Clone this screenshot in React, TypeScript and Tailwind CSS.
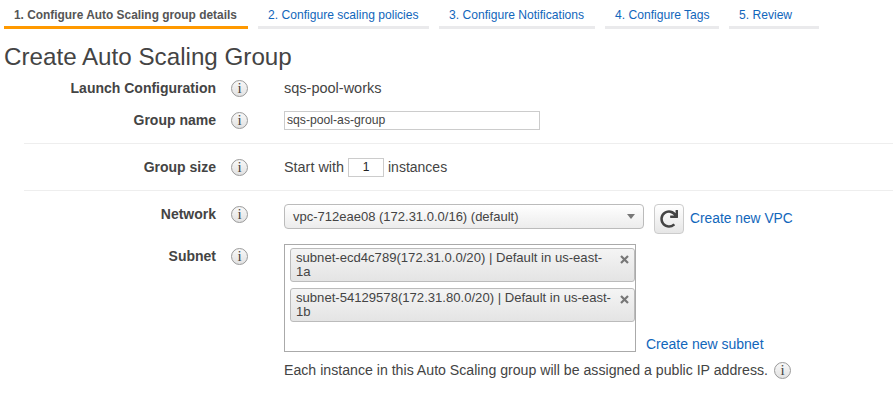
import React from 'react';
import { FaRedo } from 'react-icons/fa';

const tabs = [
  { label: '1. Configure Auto Scaling group details', width: 'w-[244px]', active: true },
  { label: '2. Configure scaling policies', width: 'w-[171px]' },
  { label: '3. Configure Notifications', width: 'w-[156px]' },
  { label: '4. Configure Tags', width: 'w-[114px]' },
  { label: '5. Review', width: 'w-[90px]' },
];

const subnets = [
  { name: 'subnet-ecd4c789(172.31.0.0/20) | Default in us-east-', zone: '1a' },
  { name: 'subnet-54129578(172.31.80.0/20) | Default in us-east-', zone: '1b' },
];

const InfoIcon = () => (
  <span className="flex h-[17px] w-[17px] shrink-0 items-center justify-center rounded-full border border-[#999] bg-gradient-to-b from-[#f8f8f8] to-[#e2e2e2] font-['Liberation_Serif',serif] text-[15px] leading-none text-[#444]">
    i
  </span>
);

const Label = ({ text }: { text: string }) => (
  <div className="flex w-[248px] items-center justify-end gap-[15px]">
    <span className="text-[14px] font-bold text-[#444]">{text}</span>
    <InfoIcon />
  </div>
);

export default function App() {
  return (
    <div className="h-[408px] w-[893px] overflow-hidden bg-white font-['Liberation_Sans',Arial,sans-serif] text-[14px] text-[#444]">
      <div className="flex gap-[10px] pl-[4px] pt-[7px]">
        {tabs.map((t) => (
          <div
            key={t.label}
            className={`h-[22px] border-b-[3px] pl-[10px] pt-[1px] leading-[14px] ${t.width} ${
              t.active
                ? 'border-[#f90] text-[11.9px] font-bold text-[#555]'
                : 'border-[#eaeaec] text-[12.1px] text-[#1166bb]'
            }`}
          >
            {t.label}
          </div>
        ))}
      </div>

      <h1 className="mt-[13px] pl-[4px] text-[24.2px] leading-[30px] text-[#444]">Create Auto Scaling Group</h1>

      <div className="mt-[6px] flex h-[20px] items-center">
        <Label text="Launch Configuration" />
        <span className="ml-[36px] text-[14.5px] leading-[18px]">sqs-pool-works</span>
      </div>

      <div className="mt-[12px] flex h-[20px] items-center">
        <Label text="Group name" />
        <div className="ml-[36px] flex h-[19px] w-[256px] items-center border border-[#ccc] pl-[2px] text-[12.2px]">
          sqs-pool-as-group
        </div>
      </div>

      <div className="ml-[24px] mt-[13px] h-px bg-[#eee]" />

      <div className="mt-[13px] flex h-[20px] items-center">
        <Label text="Group size" />
        <div className="ml-[36px] flex items-center gap-[4px] text-[14.4px] leading-[18px]">
          <span>Start with</span>
          <div className="flex h-[19px] w-[36px] items-center justify-center border border-[#ccc] text-[12px] text-[#222]">1</div>
          <span className="text-[14px]">instances</span>
        </div>
      </div>

      <div className="ml-[24px] mt-[13px] h-px bg-[#eee]" />

      <div className="mt-[13px] flex h-[29px] items-start">
        <Label text="Network" />
        <div className="ml-[36px] flex items-start">
          <div className="flex h-[25px] w-[360px] items-center justify-between rounded-[4px] border border-[#bbb] bg-gradient-to-b from-white to-[#ececec] pl-[8px] pr-[8px] text-[13px]">
            <span>vpc-712eae08 (172.31.0.0/16) (default)</span>
            <span className="h-0 w-0 border-x-[4px] border-t-[5px] border-x-transparent border-t-[#777]" />
          </div>
          <div className="ml-[10px] flex h-[30px] w-[30px] items-center justify-center rounded-[4px] border border-[#ccc] bg-gradient-to-b from-white to-[#e6e6e6]">
            <FaRedo size={18} className="text-[#444]" />
          </div>
          <span className="ml-[6px] pt-[5px] text-[13.8px] text-[#1166bb]">Create new VPC</span>
        </div>
      </div>

      <div className="mt-[11px] flex items-start">
        <div className="pt-[2px]">
          <Label text="Subnet" />
        </div>
        <div className="ml-[36px] w-[600px]">
          <div className="flex items-end">
            <div className="h-[108px] w-[352px] border border-[#aaa] pl-[5px] pt-[3px]">
              {subnets.map((s) => (
                <div
                  key={s.zone}
                  className="relative mb-[6px] h-[34px] w-[345px] rounded-[3px] border border-[#bbb] bg-gradient-to-b from-[#f4f4f4] to-[#e4e4e4] pl-[5px] pt-[2px] text-[13.1px] leading-[14px] text-[#444]"
                >
                  <div>{s.name}</div>
                  <div>{s.zone}</div>
                  <svg viewBox="0 0 9 9" className="absolute right-[5px] top-[6px] h-[9px] w-[9px]">
                    <path d="M1 1L8 8M8 1L1 8" stroke="#777" strokeWidth="2.2" />
                  </svg>
                </div>
              ))}
            </div>
            <span className="mb-[-3px] ml-[10px] text-[#1166bb]">Create new subnet</span>
          </div>
          <div className="mt-[8px] flex items-center gap-[6px]">
            <span className="whitespace-nowrap text-[14.15px]">Each instance in this Auto Scaling group will be assigned a public IP address.</span>
            <InfoIcon />
          </div>
        </div>
      </div>
    </div>
  );
}
